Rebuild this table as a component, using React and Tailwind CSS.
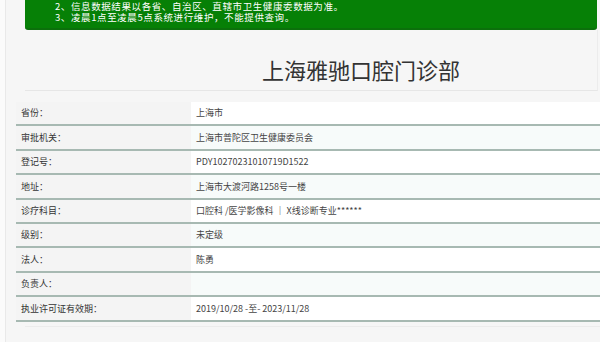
import React from 'react';

const rows = [
  { label: '省份：', value: '上海市' },
  { label: '审批机关：', value: '上海市普陀区卫生健康委员会' },
  { label: '登记号：', value: 'PDY10270231010719D1522' },
  { label: '地址：', value: '上海市大渡河路1258号一楼' },
  { label: '诊疗科目：', value: '口腔科 /医学影像科 ｜ X线诊断专业******' },
  { label: '级别：', value: '未定级' },
  { label: '法人：', value: '陈勇' },
  { label: '负责人：', value: '' },
  { label: '执业许可证有效期：', value: '2019/10/28 -至- 2023/11/28' },
];

const App = () => {
  return (
    <div
      className="w-[600px] h-[342px] overflow-hidden bg-[#fbfbfb] text-[#333]"
      style={{ fontFamily: '"Noto Sans CJK SC", "Noto Sans", sans-serif' }}
    >
      <div className="ml-[5px] h-full border-l border-[#e9e9e9] bg-[#f6f6f6]">
        {/* Notice banner */}
        <div className="ml-[19px] mr-[3px] h-[30px] bg-[#068006] border-b-2 border-[#0b700b] rounded-b-[3px] pl-[30px] pt-[1px] text-white text-[9.5px] leading-[10.5px] tracking-[0.6px]">
          <p>2、信息数据结果以各省、自治区、直辖市卫生健康委数据为准。</p>
          <p>3、凌晨1点至凌晨5点系统进行维护，不能提供查询。</p>
        </div>

        {/* Title */}
        <div className="ml-[19px] mr-[2px] border-r border-[#ececec] h-[61px] border-b border-b-[#e6e6e6] pl-[100px] pt-[26px] text-center">
          <h1 className="text-[22px] leading-[26px] text-[#333] font-normal">上海雅驰口腔门诊部</h1>
        </div>

        {/* Info table */}
        <div className="mt-[11px] ml-[10px]">
          {rows.map((row, i) => (
            <div
              key={row.label}
              className="flex h-[24.4px] border-b-2 border-[#a7b9b2] text-[9px]"
            >
              <div className="w-[175px] pl-[5px] flex items-center bg-[#f4f4f4] text-[#333]">
                {row.label}
              </div>
              <div
                className={`flex-1 pl-[5px] flex items-center text-[#444] ${
                  i % 2 === 1 ? 'bg-[#f7fbfa]' : 'bg-white'
                }`}
              >
                {row.value}
              </div>
            </div>
          ))}
        </div>
        <div className="ml-[19px] mt-[4px] border-b border-[#ececec]" />
      </div>
    </div>
  );
};

export default App;
